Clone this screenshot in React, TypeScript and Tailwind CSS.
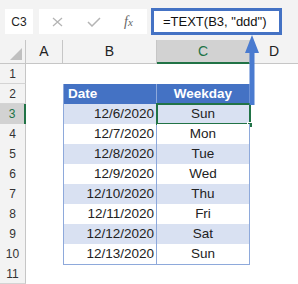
const rows = [
  { date: "12/6/2020", day: "Sun" },
  { date: "12/7/2020", day: "Mon" },
  { date: "12/8/2020", day: "Tue" },
  { date: "12/9/2020", day: "Wed" },
  { date: "12/10/2020", day: "Thu" },
  { date: "12/11/2020", day: "Fri" },
  { date: "12/12/2020", day: "Sat" },
  { date: "12/13/2020", day: "Sun" },
];

const cols = "grid grid-cols-[26px_37px_94px_93px_48px]";

function RowHeader({ n, selected }: { n: number; selected?: boolean }) {
  return (
    <div
      className={
        "flex items-center justify-center border-b border-[#d4d4d4] text-[12px] " +
        (selected
          ? "bg-[#d2d2d2] border-r-2 border-r-[#217346] text-[#217346]"
          : "bg-[#f3f3f3] border-r border-r-[#c6c6c6] text-[#333]")
      }
    >
      {n}
    </div>
  );
}

export default function App() {
  return (
    <div className="relative w-[298px] h-[284px] overflow-hidden bg-white font-['Liberation_Sans',Arial,sans-serif] text-[#222]">
      {/* formula bar */}
      <div className="h-[40px] bg-[#f3f3f3] flex items-start pt-[8px]">
        <div className="ml-[5px] mt-[1px] w-[28px] h-[25px] bg-white flex items-center justify-center text-[12px]">
          C3
        </div>
        <div className="ml-[6px] mt-[1px] w-[108px] h-[25px] bg-white flex items-center">
          <svg width="11" height="10" viewBox="0 0 11 10" className="ml-[13px]">
            <path d="M1 1 L10 9 M10 1 L1 9" stroke="#b4b4b4" strokeWidth="1.3" />
          </svg>
          <svg width="14" height="10" viewBox="0 0 14 10" className="ml-[24px]">
            <path d="M1 5 L5 9 L13 1" stroke="#b4b4b4" strokeWidth="1.5" fill="none" />
          </svg>
          <span className="ml-[23px] font-['Liberation_Serif',serif] italic text-[14px] text-[#666] leading-none">
            f<span className="text-[11px]">x</span>
          </span>
        </div>
        <div className="ml-[4px] w-[131px] h-[27px] bg-white border-[3px] border-[#4472C4] flex items-center pl-[9px] text-[13px] text-[#111]">
          =TEXT(B3, "ddd")
        </div>
      </div>

      {/* column headers */}
      <div className={cols + " h-[24px] bg-[#f3f3f3] text-[14px]"}>
        <div className="relative border-r border-b border-[#c6c6c6]">
          <svg width="12" height="12" viewBox="0 0 12 12" className="absolute right-[3px] bottom-[3px]">
            <path d="M12 0 L12 12 L0 12 Z" fill="#c0c0c0" />
          </svg>
        </div>
        <div className="flex items-center justify-center border-r border-b border-[#c6c6c6]">A</div>
        <div className="flex items-center justify-center border-r border-b border-[#c6c6c6]">B</div>
        <div className="flex items-center justify-center bg-[#d2d2d2] border-r border-r-[#c6c6c6] border-b-2 border-b-[#217346] text-[#217346]">
          C
        </div>
        <div className="flex items-center justify-center border-b border-[#c6c6c6]">D</div>
      </div>

      {/* row 1 */}
      <div className={cols + " h-[20px]"}>
        <RowHeader n={1} />
        <div />
        <div />
        <div />
        <div />
      </div>

      {/* row 2: table header */}
      <div className={cols + " h-[20px] text-[13.5px]"}>
        <RowHeader n={2} />
        <div />
        <div className="bg-[#4472C4] text-white font-bold flex items-center pl-[4px] border-l border-[#8EA9DB] border-r border-r-[#8EA9DB]">
          Date
        </div>
        <div className="bg-[#4472C4] text-white font-bold flex items-center justify-center border-r border-[#8EA9DB]">
          Weekday
        </div>
        <div />
      </div>

      {rows.map((r, i) => {
        const band = i % 2 === 0 ? "bg-[#D9E1F2]" : "bg-white";
        return (
          <div key={i} className={cols + " h-[20px] text-[13.5px]"}>
            <RowHeader n={i + 3} selected={i === 0} />
            <div />
            <div className={band + " flex items-center justify-end pr-[2px] border-l border-r border-b border-[#8EA9DB]"}>
              {r.date}
            </div>
            <div className={band + " relative flex items-center justify-center border-r border-b border-[#8EA9DB]"}>
              {r.day}
              {i === 0 && (
                <>
                  <div className="absolute -left-[1px] -top-[1px] -right-[2px] -bottom-[1px] border-2 border-[#217346]" />
                  <div className="absolute -right-[4px] -bottom-[4px] w-[6px] h-[6px] bg-[#217346] border border-white" />
                </>
              )}
            </div>
            <div />
          </div>
        );
      })}

      {/* row 11 */}
      <div className={cols + " h-[20px]"}>
        <RowHeader n={11} />
        <div />
        <div />
        <div />
        <div />
      </div>

      {/* arrow from C3 to formula */}
      <svg width="16" height="71" viewBox="0 0 16 71" className="absolute left-[244px] top-[35px]">
        <path d="M8 0 L15 18 L10.5 18 L10.5 70 L5.5 70 L5.5 18 L1 18 Z" fill="#4a7bd0" />
      </svg>
    </div>
  );
}
